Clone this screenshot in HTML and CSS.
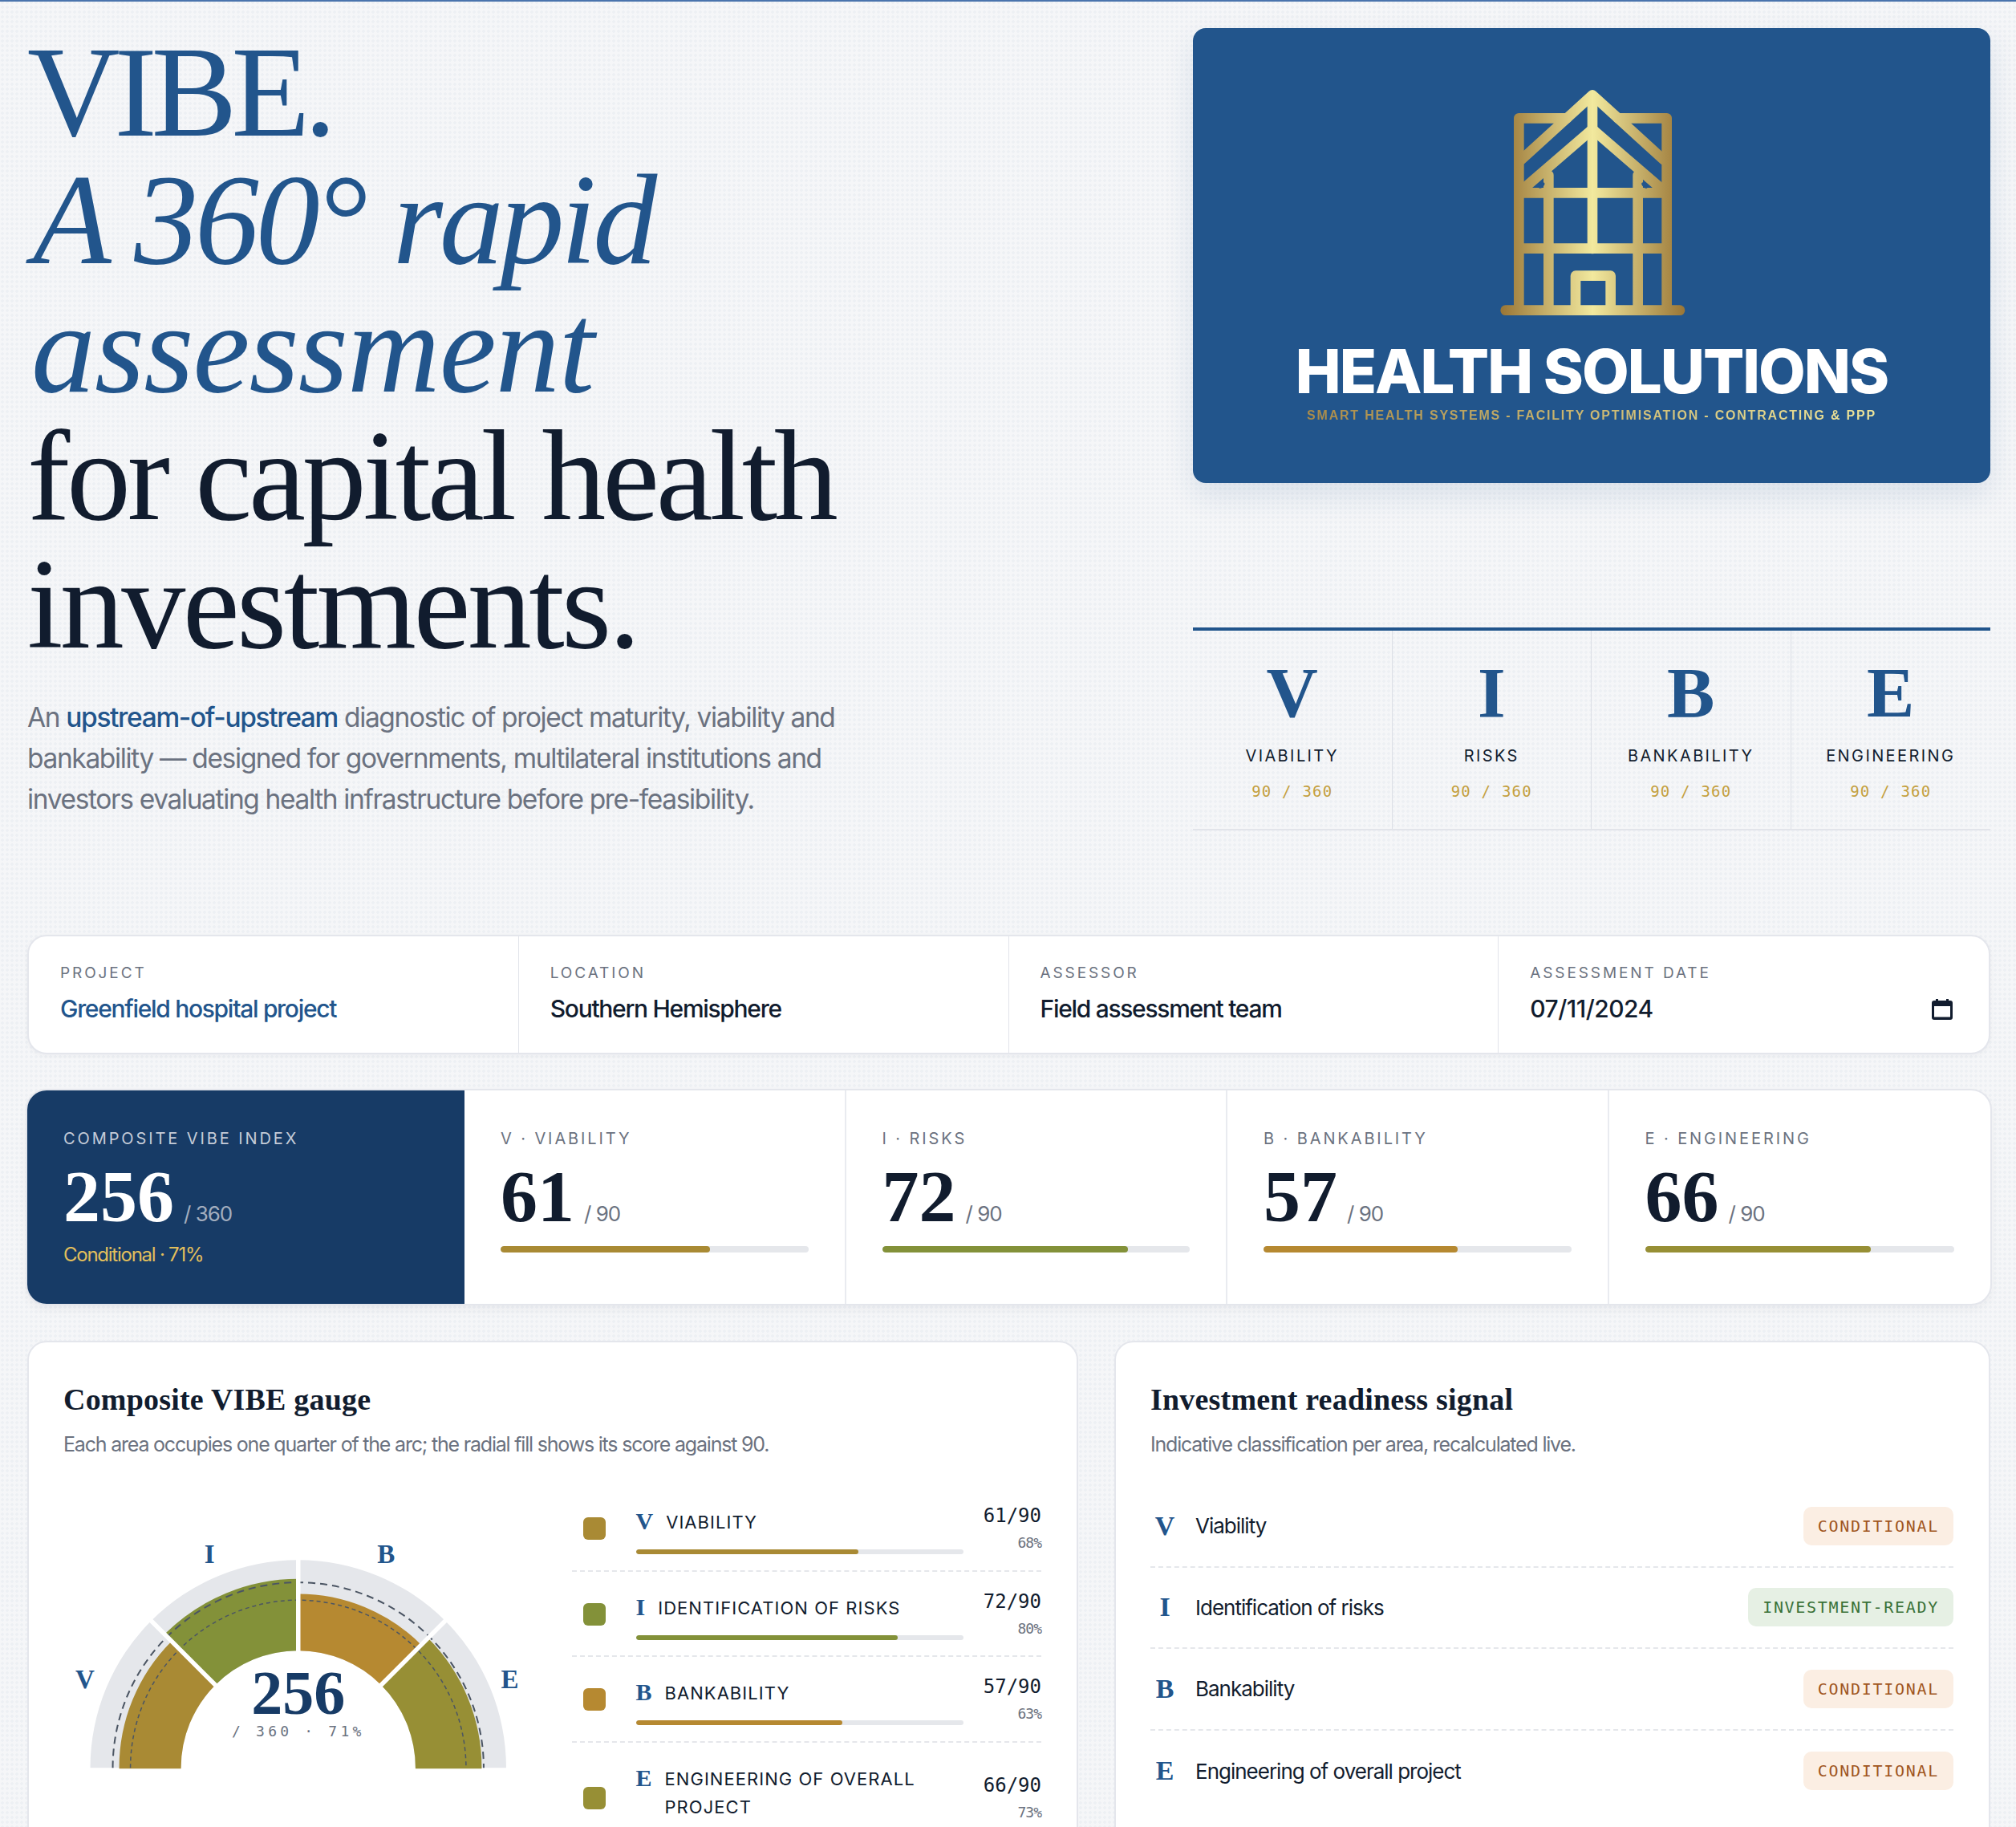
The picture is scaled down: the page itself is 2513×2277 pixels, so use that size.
FILE: index.html
```html
<!DOCTYPE html>
<html>
<head>
  <meta charset="UTF-8" />
  <title>VIBE assessment</title>
  <link rel="stylesheet" href="styles.css">
</head>
<body>
  <div class="page">
    <section class="hero">
      <div class="hero-left">
        <h1 class="hero-title"><span class="blue line-vibe">VIBE.</span><br><em class="blue"><span class="line-rapid">A 360° rapid</span><br><span class="line-assess">assessment</span></em><br>for capital health<br><span class="line-invest">investments.</span></h1>
        <p class="hero-text">An <strong>upstream-of-upstream</strong> diagnostic of project maturity, viability and bankability — designed for governments, multilateral institutions and investors evaluating health infrastructure before pre-feasibility.</p>
      </div>
      <div class="hero-right">
        <div class="logo-card">
          <svg class="logo-mark" viewBox="0 0 900 960" fill="none">
            <defs>
              <linearGradient id="gold" gradientUnits="userSpaceOnUse" x1="92" y1="0" x2="780" y2="0">
                <stop offset="0" stop-color="#9a7636"/>
                <stop offset="0.5" stop-color="#f2e99e"/>
                <stop offset="1" stop-color="#9a7636"/>
              </linearGradient>
            </defs>
            <g stroke="url(#gold)" stroke-width="38" stroke-linejoin="round" stroke-linecap="round">
              <path d="M340 172H160V890M530 172H713V890"/>
              <path d="M168 328L435 85L702 328"/>
              <path d="M172 440L435 213L698 440"/>
              <path d="M435 90V660"/>
              <path d="M160 451H713M160 659H713"/>
              <path d="M271 385V890M605 385V890"/>
              <path d="M372 890V761H503V890"/>
              <path d="M110 890H762"/>
            </g>
            <ellipse cx="245" cy="423" rx="14" ry="7" transform="rotate(-45 245 423)" fill="#22558c"/>
            <ellipse cx="630" cy="423" rx="14" ry="7" transform="rotate(45 630 423)" fill="#22558c"/>
          </svg>
          <div class="logo-name">HEALTH SOLUTIONS</div>
          <div class="logo-tag">SMART HEALTH SYSTEMS - FACILITY OPTIMISATION - CONTRACTING &amp; PPP</div>
        </div>
        <div class="vibe-row">
          <div class="vibe-cell"><div class="vibe-letter">V</div><div class="vibe-name">VIABILITY</div><div class="vibe-max">90 / 360</div></div>
          <div class="vibe-cell"><div class="vibe-letter">I</div><div class="vibe-name">RISKS</div><div class="vibe-max">90 / 360</div></div>
          <div class="vibe-cell"><div class="vibe-letter">B</div><div class="vibe-name">BANKABILITY</div><div class="vibe-max">90 / 360</div></div>
          <div class="vibe-cell"><div class="vibe-letter">E</div><div class="vibe-name">ENGINEERING</div><div class="vibe-max">90 / 360</div></div>
        </div>
      </div>
    </section>

    <section class="meta-card">
      <div class="meta-cell">
        <div class="meta-label">PROJECT</div>
        <div class="meta-value blue">Greenfield hospital project</div>
      </div>
      <div class="meta-cell">
        <div class="meta-label">LOCATION</div>
        <div class="meta-value">Southern Hemisphere</div>
      </div>
      <div class="meta-cell">
        <div class="meta-label">ASSESSOR</div>
        <div class="meta-value">Field assessment team</div>
      </div>
      <div class="meta-cell">
        <div class="meta-label">ASSESSMENT DATE</div>
        <div class="meta-date">
          <span class="meta-value date-value">07/11/2024</span>
          <svg class="cal-icon" viewBox="0 0 26 26"><path fill-rule="evenodd" d="M5 0h3v2h10V0h3v2h2a3 3 0 0 1 3 3v18a3 3 0 0 1-3 3H3a3 3 0 0 1-3-3V5a3 3 0 0 1 3-3h2zM3 9v13.500h20V9z"/></svg>
        </div>
      </div>
    </section>

    <section class="score-strip">
      <div class="score-main">
        <div class="score-label">COMPOSITE VIBE INDEX</div>
        <div class="score-line"><span class="score-num">256</span><span class="score-of">/ 360</span></div>
        <div class="score-status">Conditional · 71%</div>
      </div>
      <div class="score-cell">
        <div class="score-label">V · VIABILITY</div>
        <div class="score-line"><span class="score-num">61</span><span class="score-of">/ 90</span></div>
        <div class="bar"><div class="bar-fill fill-v" style="width:68%"></div></div>
      </div>
      <div class="score-cell">
        <div class="score-label">I · RISKS</div>
        <div class="score-line"><span class="score-num">72</span><span class="score-of">/ 90</span></div>
        <div class="bar"><div class="bar-fill fill-i" style="width:80%"></div></div>
      </div>
      <div class="score-cell">
        <div class="score-label">B · BANKABILITY</div>
        <div class="score-line"><span class="score-num">57</span><span class="score-of">/ 90</span></div>
        <div class="bar"><div class="bar-fill fill-b" style="width:63%"></div></div>
      </div>
      <div class="score-cell">
        <div class="score-label">E · ENGINEERING</div>
        <div class="score-line"><span class="score-num">66</span><span class="score-of">/ 90</span></div>
        <div class="bar"><div class="bar-fill fill-e" style="width:73%"></div></div>
      </div>
    </section>

    <section class="panels">
      <div class="panel">
        <h2 class="panel-title">Composite VIBE gauge</h2>
        <p class="panel-sub">Each area occupies one quarter of the arc; the radial fill shows its score against 90.</p>
        <div class="gauge-grid">
          <svg class="gauge" viewBox="0 0 585 370">
            <!-- origin of the arc is 292.5, 342 -->
            <path fill="#e5e7eb" d="M33.500 342A259 259 0 0 1 551.500 342H438.500A146 146 0 0 0 146.500 342Z"/>
            <path fill="#a98a34" d="M69.500 343A223 223 0 0 1 134.800 184.300L189.300 238.800A146 146 0 0 0 146.500 343Z"/>
            <path fill="#839139" d="M126.100 175.600A235.300 235.300 0 0 1 292.500 106.700V196A146 146 0 0 0 189.300 238.800Z"/>
            <path fill="#b68931" d="M292.500 125.400A216.600 216.600 0 0 1 445.700 188.800L395.700 238.800A146 146 0 0 0 292.500 196Z"/>
            <path fill="#978f35" d="M454.100 180.400A228.500 228.500 0 0 1 521 343H438.500A146 146 0 0 0 395.700 238.800Z"/>
            <path class="dash-outer" d="M61.500 342A231 231 0 0 1 523.500 342"/>
            <path class="dash-inner" d="M83.500 342A209 209 0 0 1 501.500 342"/>
            <path class="gauge-gap" d="M193.500 243L105.100 154.600M292.500 200V78M391.500 243L479.900 154.600"/>
            <text class="gauge-letter" x="27" y="243" text-anchor="middle">V</text>
            <text class="gauge-letter" x="182" y="87" text-anchor="middle">I</text>
            <text class="gauge-letter" x="402" y="87" text-anchor="middle">B</text>
            <text class="gauge-letter" x="556" y="243" text-anchor="middle">E</text>
            <text class="gauge-num" x="292.5" y="275" text-anchor="middle">256</text>
            <text class="gauge-of" x="292.5" y="303" text-anchor="middle">/ 360 · 71%</text>
          </svg>
          <div class="legend">
            <div class="legend-row">
              <span class="swatch fill-v"></span>
              <div class="legend-main">
                <div class="legend-name"><span class="legend-letter">V</span><span>VIABILITY</span></div>
                <div class="bar legend-bar"><div class="bar-fill fill-v" style="width:68%"></div></div>
              </div>
              <div class="legend-val"><div class="legend-score">61/90</div><div class="legend-pct">68%</div></div>
            </div>
            <div class="legend-row">
              <span class="swatch fill-i"></span>
              <div class="legend-main">
                <div class="legend-name"><span class="legend-letter">I</span><span>IDENTIFICATION OF RISKS</span></div>
                <div class="bar legend-bar"><div class="bar-fill fill-i" style="width:80%"></div></div>
              </div>
              <div class="legend-val"><div class="legend-score">72/90</div><div class="legend-pct">80%</div></div>
            </div>
            <div class="legend-row">
              <span class="swatch fill-b"></span>
              <div class="legend-main">
                <div class="legend-name"><span class="legend-letter">B</span><span>BANKABILITY</span></div>
                <div class="bar legend-bar"><div class="bar-fill fill-b" style="width:63%"></div></div>
              </div>
              <div class="legend-val"><div class="legend-score">57/90</div><div class="legend-pct">63%</div></div>
            </div>
            <div class="legend-row">
              <span class="swatch fill-e"></span>
              <div class="legend-main">
                <div class="legend-name"><span class="legend-letter">E</span><span>ENGINEERING OF OVERALL PROJECT</span></div>
                <div class="bar legend-bar"><div class="bar-fill fill-e" style="width:73%"></div></div>
              </div>
              <div class="legend-val"><div class="legend-score">66/90</div><div class="legend-pct">73%</div></div>
            </div>
          </div>
        </div>
      </div>

      <div class="panel">
        <h2 class="panel-title">Investment readiness signal</h2>
        <p class="panel-sub">Indicative classification per area, recalculated live.</p>
        <div class="signals">
          <div class="signal-row"><span class="signal-letter">V</span><span class="signal-name">Viability</span><span class="chip chip-cond">CONDITIONAL</span></div>
          <div class="signal-row"><span class="signal-letter">I</span><span class="signal-name">Identification of risks</span><span class="chip chip-ready">INVESTMENT-READY</span></div>
          <div class="signal-row"><span class="signal-letter">B</span><span class="signal-name">Bankability</span><span class="chip chip-cond">CONDITIONAL</span></div>
          <div class="signal-row"><span class="signal-letter">E</span><span class="signal-name">Engineering of overall project</span><span class="chip chip-cond">CONDITIONAL</span></div>
        </div>
      </div>
    </section>
  </div>
</body>
</html>
```
FILE: styles.css
```css
html, body {
  height: 100%;
  overflow: hidden;
}
body {
  margin: 0;
  font-family: Inter, "Liberation Sans", sans-serif;
  color: #111c2e;
  background-color: #f5f6f8;
  background-image: radial-gradient(circle, rgba(31,84,137,0.035) 1.5px, transparent 2px);
  background-size: 6px 6px;
  border-top: 2px solid #4a74ad;
  box-sizing: border-box;
}
.page {
  padding: 0 32px 0 34px;
}
.blue {
  color: #22558c;
}

/* hero */
.hero {
  display: grid;
  grid-template-columns: 1fr 994px;
  gap: 60px;
  height: 1163px;
}
.hero-title {
  margin: 34px 0 0;
  font-family: "Liberation Serif", serif;
  font-weight: 400;
  font-size: 160px;
  line-height: 159.4px;
  letter-spacing: -4.3px;
}
.hero-title em {
  font-style: italic;
}
.line-vibe {
  letter-spacing: -7px;
}
.line-rapid {
  margin-left: 7px;
}
.line-assess {
  margin-left: 5px;
  letter-spacing: -1px;
}
.line-invest {
  letter-spacing: -3.6px;
}
.hero-text {
  margin: 36px 0 0;
  max-width: 1030px;
  font-size: 33.5px;
  line-height: 51px;
  letter-spacing: -1.36px;
  color: #6b7280;
}
.hero-text strong {
  color: #22558c;
  font-weight: 500;
}
.logo-card {
  margin-top: 33px;
  height: 567px;
  background: #22558c;
  border-radius: 16px;
  box-shadow: 0 16px 36px rgba(34,85,140,0.12);
  display: flex;
  flex-direction: column;
  align-items: center;
  box-sizing: border-box;
  padding-top: 55px;
}
.logo-mark {
  width: 300px;
  height: 320px;
  flex: none;
  margin-left: 12px;
}
.logo-name {
  margin-top: 7px;
  font-weight: 800;
  font-size: 76px;
  line-height: 90px;
  letter-spacing: -2px;
  color: #fff;
}
.logo-tag {
  font-family: "Liberation Sans", sans-serif;
  font-weight: 700;
  font-size: 16px;
  line-height: 22px;
  letter-spacing: 1.8px;
  color: transparent;
  background: linear-gradient(90deg, #a98b4a, #efe69a);
  -webkit-background-clip: text;
  background-clip: text;
}
.vibe-row {
  margin-top: 180px;
  display: grid;
  grid-template-columns: repeat(4, 1fr);
  border-top: 4px solid #22558c;
  border-bottom: 2px solid #e2e4ea;
  height: 253px;
  box-sizing: border-box;
}
.vibe-cell {
  text-align: center;
  border-right: 1px solid #dcdfe6;
  padding-top: 32px;
}
.vibe-cell:last-child {
  border-right: none;
}
.vibe-letter {
  font-family: "Liberation Serif", serif;
  font-weight: 700;
  font-size: 89px;
  line-height: 90px;
  color: #22558c;
}
.vibe-name {
  margin-top: 22px;
  font-size: 20px;
  line-height: 24px;
  letter-spacing: 2.4px;
}
.vibe-max {
  margin-top: 20px;
  font-family: "DejaVu Sans Mono", monospace;
  font-size: 19px;
  line-height: 24px;
  letter-spacing: 1.2px;
  color: #c4a03f;
}

/* meta card */
.meta-card {
  display: grid;
  grid-template-columns: repeat(4, 1fr);
  height: 149px;
  background: #fff;
  border: 2px solid #e4e6ec;
  border-radius: 24px;
  box-sizing: border-box;
  box-shadow: 0 2px 6px rgba(17,28,46,0.04);
}
.meta-cell {
  padding: 34px 39px 0;
  border-right: 1px solid #e2e4ea;
}
.meta-cell:last-child {
  border-right: none;
}
.meta-label {
  font-size: 19px;
  line-height: 24px;
  letter-spacing: 2.9px;
  color: #6b7280;
}
.meta-value {
  margin-top: 13px;
  font-size: 30px;
  line-height: 38px;
  font-weight: 500;
  letter-spacing: -1.3px;
}
.date-value {
  letter-spacing: -0.5px;
}
.meta-date {
  display: flex;
  align-items: flex-end;
  justify-content: space-between;
  padding-right: 6px;
}
.cal-icon {
  width: 26px;
  height: 26px;
  margin-bottom: 5px;
  fill: #111c2e;
}

/* score strip */
.score-strip {
  margin-top: 45px;
  display: grid;
  grid-template-columns: 545px repeat(4, 1fr);
  height: 266px;
  background: #fff;
  border-radius: 24px;
  overflow: hidden;
  box-shadow: 0 0 0 2px #e4e6ec, 0 6px 14px rgba(17,28,46,0.05);
}
.score-main {
  background: #173b66;
  padding: 47px 45px 0;
  color: #fff;
}
.score-main .score-label {
  color: #c5ccd8;
}
.score-main .score-of {
  color: #a3aebf;
}
.score-cell {
  padding: 47px 45px 0;
  border-right: 2px solid #e9ebf0;
}
.score-cell:last-child {
  border-right: none;
}
.score-label {
  font-size: 20px;
  line-height: 26px;
  letter-spacing: 2.9px;
  color: #6b7280;
}
.score-line {
  margin-top: 15px;
  display: flex;
  align-items: baseline;
  gap: 12px;
}
.score-num {
  font-family: "Liberation Serif", serif;
  font-weight: 700;
  font-size: 92px;
  line-height: 88px;
}
.score-of {
  font-size: 26px;
  letter-spacing: -1px;
  color: #6b7280;
}
.score-status {
  margin-top: 14px;
  font-size: 24px;
  line-height: 30px;
  letter-spacing: -1.25px;
  color: #e2bf5c;
}
.bar {
  height: 8px;
  border-radius: 4px;
  background: #e5e7eb;
  overflow: hidden;
}
.bar-fill {
  height: 100%;
  border-radius: 4px;
}
.score-cell .bar {
  margin-top: 18px;
}
.fill-v { background: #a98a34; }
.fill-i { background: #839139; }
.fill-b { background: #b68931; }
.fill-e { background: #978f35; }

/* panels */
.panels {
  margin-top: 46px;
  display: grid;
  grid-template-columns: 1310px 1092px;
  gap: 45px;
}
.panel {
  background: #fff;
  border: 2px solid #e4e6ec;
  border-radius: 24px;
  padding: 47px 44px 40px 43px;
  height: 900px;
  box-sizing: border-box;
}
.panel-title {
  margin: 0;
  font-family: "Liberation Serif", serif;
  font-weight: 700;
  font-size: 38px;
  line-height: 48px;
  letter-spacing: 0.2px;
}
.panel-sub {
  margin: 15px 0 0;
  font-size: 25px;
  line-height: 34px;
  letter-spacing: -1.2px;
  color: #6b7280;
}
.gauge-grid {
  display: grid;
  grid-template-columns: 1fr 1fr;
  gap: 48px;
  margin-top: 35px;
}
.gauge {
  width: 100%;
  margin-top: 9px;
  overflow: visible;
}
.gauge-gap {
  fill: none;
  stroke: #fff;
  stroke-width: 5.5;
}
.dash-outer {
  fill: none;
  stroke: #4b5563;
  stroke-width: 2;
  stroke-dasharray: 9 6;
}
.dash-inner {
  fill: none;
  stroke: #4b5563;
  stroke-width: 1.5;
  stroke-dasharray: 5 4;
}
.gauge-letter {
  font-family: "Liberation Serif", serif;
  font-weight: 700;
  font-size: 33px;
  fill: #22558c;
}
.gauge-num {
  font-family: "Liberation Serif", serif;
  font-weight: 700;
  font-size: 78px;
  fill: #173b66;
}
.gauge-of {
  font-family: "DejaVu Sans Mono", monospace;
  font-size: 18px;
  letter-spacing: 4.2px;
  fill: #6b7280;
}
.legend-row {
  display: flex;
  align-items: flex-start;
  height: 106.5px;
  box-sizing: border-box;
  border-bottom: 2px dashed #e5e7eb;
}
.legend-row:last-child {
  border-bottom: none;
}
.swatch {
  width: 28px;
  height: 28px;
  border-radius: 6px;
  margin: 39px 38px 0 14px;
  flex: none;
}
.legend-row:last-child .swatch {
  margin-top: 55px;
}
.legend-main {
  flex: none;
  width: 408px;
  margin-top: 28px;
}
.legend-name {
  display: flex;
  align-items: flex-start;
  gap: 16px;
  font-size: 22px;
  line-height: 35px;
  letter-spacing: 1.05px;
}
.legend-letter {
  font-family: "Liberation Serif", serif;
  font-weight: 700;
  font-size: 30px;
  line-height: 32px;
  letter-spacing: 0;
  color: #22558c;
}
.legend-bar {
  margin-top: 16px;
  height: 6px;
}
.legend-val {
  margin-left: auto;
  margin-top: 22px;
  text-align: right;
}
.legend-row:last-child .legend-val {
  margin-top: 38px;
}
.legend-score {
  font-family: "DejaVu Sans Mono", monospace;
  font-size: 24px;
  line-height: 30px;
}
.legend-pct {
  margin-top: 7px;
  font-family: "DejaVu Sans Mono", monospace;
  font-size: 18px;
  line-height: 24px;
  letter-spacing: -1px;
  color: #6b7280;
}
.signals {
  margin-top: 35px;
}
.signal-row {
  display: flex;
  align-items: center;
  height: 101.5px;
  box-sizing: border-box;
  border-bottom: 2px dashed #e5e7eb;
}
.signal-row:last-child {
  border-bottom: none;
}
.signal-letter {
  width: 36px;
  margin-right: 20px;
  text-align: center;
  font-family: "Liberation Serif", serif;
  font-weight: 700;
  font-size: 34px;
  color: #22558c;
}
.signal-name {
  font-size: 26px;
  letter-spacing: -1px;
}
.chip {
  margin-left: auto;
  height: 48px;
  padding: 0 18px;
  border-radius: 10px;
  display: flex;
  align-items: center;
  font-family: "DejaVu Sans Mono", monospace;
  font-size: 20px;
  letter-spacing: 1.7px;
}
.chip-cond {
  background: #fbeee3;
  color: #a0561f;
}
.chip-ready {
  background: #e6f0e4;
  color: #3a7238;
}
```
